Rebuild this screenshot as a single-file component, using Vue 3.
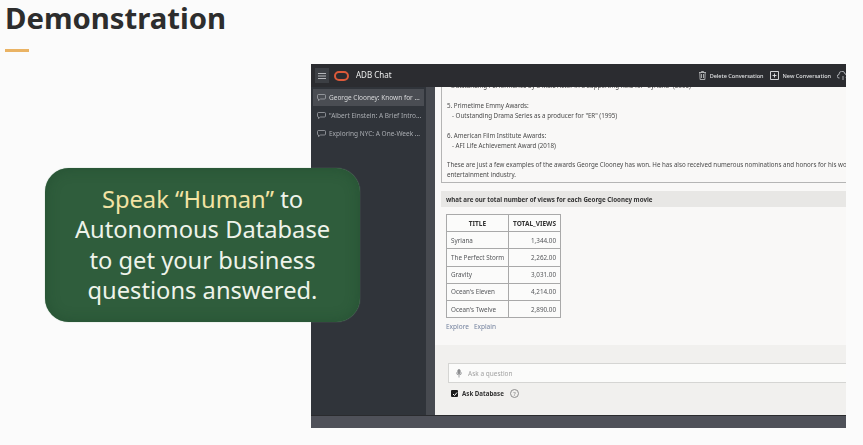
<script setup>
const chats = [
  { id: 1, title: 'George Clooney: Known for ...', active: true },
  { id: 2, title: '"Albert Einstein: A Brief Intro...', active: false },
  { id: 3, title: 'Exploring NYC: A One-Week ...', active: false }
]

const movies = [
  { title: 'Syriana', views: '1,344.00' },
  { title: 'The Perfect Storm', views: '2,262.00' },
  { title: 'Gravity', views: '3,031.00' },
  { title: "Ocean's Eleven", views: '4,214.00' },
  { title: "Ocean's Twelve", views: '2,890.00' }
]
</script>

<template>
  <div class="slide">
    <header class="slide-head">
      <h1>Demonstration</h1>
      <div class="accent"></div>
    </header>

    <div class="callout">
      <div><span class="hl">Speak “Human”</span> to</div>
      <div>Autonomous Database</div>
      <div>to get your business</div>
      <div>questions answered.</div>
    </div>

    <section class="window">
      <div class="topbar">
        <div class="menu-btn">
          <svg width="8" height="6" viewBox="0 0 8 6"><path d="M0 .5h8M0 3h8M0 5.500h8" stroke="#c2c4c7" stroke-width=".9" /></svg>
        </div>
        <svg class="logo" width="15" height="10" viewBox="0 0 15 10"><rect x="1" y="1" width="13" height="8" rx="4" fill="none" stroke="#dc5a3a" stroke-width="2" /></svg>
        <span class="app-name">ADB Chat</span>
        <div class="top-actions">
          <svg width="7" height="9" viewBox="0 0 7 9" fill="none" stroke="#c9cacc" stroke-width=".8"><path d="M0 1.500h7M2.500 1.500V.5h2v1M.8 1.500l.3 7h4.800l.3-7M2.500 3v4M4.500 3v4" /></svg>
          <span class="action">Delete Conversation</span>
          <svg class="plus" width="9" height="9" viewBox="0 0 9 9" fill="none" stroke="#e2e3e5" stroke-width=".9"><path d="M.5.5h8v8h-8zM4.500 2.500v4M2.500 4.500h4" /></svg>
          <span class="action">New Conversation</span>
          <svg class="cloud" width="11" height="9" viewBox="0 0 11 9" fill="none" stroke="#c9ccd0" stroke-width=".8"><path d="M2.500 7H2a1.700 1.700 0 0 1 0-3.400A3 3 0 0 1 8 3a2 2 0 0 1 1 3.700M6 5v4" /></svg>
        </div>
      </div>

      <div class="body">
        <aside class="sidebar">
          <div v-for="chat in chats" :key="chat.id" class="chat-item" :class="{ active: chat.active }">
            <svg width="9" height="7" viewBox="0 0 9 7" fill="none" stroke="#b0b3b8" stroke-width=".7"><path d="M1.500.5h6a1 1 0 0 1 1 1v2.500a1 1 0 0 1-1 1H3.500L1.500 6.500V5a1 1 0 0 1-1-1V1.500a1 1 0 0 1 1-1z" /></svg>
            <span>{{ chat.title }}</span>
          </div>
        </aside>
        <div class="rail"></div>

        <main class="main">
          <div class="conversation">
            <div class="answer">
              <p class="cut">- Outstanding Performance by a Male Actor in a Supporting Role for "Syriana" (2006)</p>
              <p>5. Primetime Emmy Awards:</p>
              <p class="sub">- Outstanding Drama Series as a producer for "ER" (1995)</p>
              <p class="gap">6. American Film Institute Awards:</p>
              <p class="sub">- AFI Life Achievement Award (2018)</p>
              <p class="gap closing">These are just a few examples of the awards George Clooney has won. He has also received numerous nominations and honors for his work in the</p>
              <p>entertainment industry.</p>
            </div>

            <div class="question">what are our total number of views for each George Clooney movie</div>

            <table class="result">
              <thead>
                <tr><th>TITLE</th><th>TOTAL_VIEWS</th></tr>
              </thead>
              <tbody>
                <tr v-for="m in movies" :key="m.title">
                  <td>{{ m.title }}</td>
                  <td class="num">{{ m.views }}</td>
                </tr>
              </tbody>
            </table>

            <div class="links"><span>Explore</span><span>Explain</span></div>
          </div>

          <div class="composer">
            <div class="ask-input">
              <svg width="6" height="9" viewBox="0 0 6 9" fill="none" stroke="#8c8d8f" stroke-width=".8"><rect x="1.800" y=".5" width="2.400" height="4.500" rx="1.200" fill="#8c8d8f" /><path d="M.5 3.500a2.500 2.500 0 0 0 5 0M3 6.500v2" /></svg>
              <span>Ask a question</span>
            </div>
            <div class="ask-db">
              <span class="check">
                <svg width="6" height="6" viewBox="0 0 6 6" fill="none" stroke="#fff" stroke-width="1"><path d="M1 3l1.500 1.500L5 1.500" /></svg>
              </span>
              <b>Ask Database</b>
              <span class="help">?</span>
            </div>
          </div>
        </main>
      </div>
      <div class="foot"></div>
    </section>
  </div>
</template>

<style>
html, body {
  margin: 0;
  background: #fbfbfb;
}
</style>

<style scoped>
.slide {
  position: relative;
  width: 863px;
  height: 445px;
  overflow: hidden;
  background: #fbfbfb;
  font-family: "Noto Sans", "Open Sans", sans-serif;
}

.slide-head {
  height: 64px;
  padding-left: 5px;
  box-sizing: border-box;
}

.slide-head h1 {
  margin: 0;
  font-size: 29.300px;
  line-height: 36px;
  font-weight: 700;
  color: #2d2d2d;
}

.accent {
  width: 24px;
  height: 3px;
  margin-top: 13px;
  background: #eab364;
}

.callout {
  position: absolute;
  left: 45px;
  top: 168px;
  width: 315px;
  height: 154px;
  padding-top: 16px;
  box-sizing: border-box;
  border-radius: 24px;
  background: #2f5d3c;
  box-shadow: 0 0 1px #7f9f88, inset 0 0 14px rgba(20, 60, 35, 0.35);
  color: #eef3ea;
  font-size: 23.700px;
  line-height: 30.400px;
  text-align: center;
  z-index: 2;
}

.hl {
  color: #f3e3a4;
}

.window {
  width: 535px;
  height: 364px;
  margin-left: 311px;
  display: flex;
  flex-direction: column;
  overflow: hidden;
  background: #30343a;
  filter: blur(0.35px);
}

.topbar {
  height: 23px;
  flex: none;
  display: flex;
  align-items: center;
  background: #2b2c30;
  color: #eceded;
}

.menu-btn {
  width: 14px;
  height: 15px;
  margin-left: 4px;
  display: flex;
  align-items: center;
  justify-content: center;
  background: #3c3f44;
}

.logo {
  margin-left: 5px;
}

.app-name {
  margin-left: 7px;
  margin-bottom: 3px;
  font-size: 8px;
}

.top-actions {
  margin-left: auto;
  display: flex;
  align-items: center;
  margin-right: -2px;
}

.action {
  margin-left: 4px;
  font-size: 5.550px;
  color: #dfe0e2;
  font-weight: 500;
}

.plus {
  margin-left: 6px;
}

.cloud {
  margin-left: 6px;
}

.body {
  flex: 1;
  display: flex;
  min-height: 0;
}

.sidebar {
  width: 115px;
  flex: none;
  padding: 2px 2px 0 2px;
  box-sizing: border-box;
}

.rail {
  width: 9px;
  flex: none;
  background: #474a50;
}

.chat-item {
  height: 18px;
  display: flex;
  align-items: center;
  gap: 3px;
  padding-left: 4px;
  font-size: 6.500px;
  color: #a9acb1;
  white-space: nowrap;
  overflow: hidden;
}

.chat-item.active {
  height: 17px;
  background: #4a4d53;
  color: #d8d9db;
}

.main {
  flex: 1;
  min-width: 0;
  display: flex;
  flex-direction: column;
  background: #f1f0ee;
  color: #4a4a4a;
}

.conversation {
  height: 258px;
  flex: none;
  padding: 0 0 0 6px;
  box-sizing: border-box;
  background: #f9f8f7;
  overflow: hidden;
}

.answer {
  height: 96px;
  padding: 0 0 0 5px;
  box-sizing: border-box;
  border: 1px solid #b5b5b5;
  border-top: none;
  border-right: none;
  font-size: 6.200px;
  line-height: 10px;
  white-space: nowrap;
  overflow: hidden;
}

.answer p {
  margin: 0;
}

.answer .cut {
  margin-top: -6px;
  margin-bottom: 10px;
}

.answer .sub {
  padding-left: 5px;
}

.answer .gap {
  margin-top: 10px;
}

.answer .closing {
  margin-top: 9px;
}

.question {
  height: 16px;
  margin-top: 8px;
  padding-left: 5px;
  display: flex;
  align-items: center;
  background: #e8e7e5;
  font-size: 6.200px;
  font-weight: 700;
  color: #333;
}

.result {
  margin: 7px 0 0 5px;
  width: 115px;
  border-collapse: collapse;
  table-layout: fixed;
  font-size: 6.300px;
  color: #55575a;
}

.result th,
.result td {
  height: 17.200px;
  padding: 0 4px;
  border: 1px solid #a9a9a9;
  box-sizing: border-box;
  font-weight: 400;
  white-space: nowrap;
  background: #fbfbfa;
}

.result th {
  font-size: 6.500px;
  font-weight: 700;
  color: #333;
  text-align: center;
}

.result th:first-child,
.result td:first-child {
  width: 62px;
}

.result th:last-child {
  padding: 0;
}

.result .num {
  text-align: right;
}

.links {
  display: flex;
  gap: 5px;
  margin: 4px 0 0 5px;
  font-size: 6.500px;
  color: #74829e;
}

.composer {
  flex: 1;
  padding: 18px 0 0 13px;
}

.ask-input {
  height: 18px;
  display: flex;
  align-items: center;
  gap: 6px;
  padding-left: 7px;
  border: 1px solid #d5d5d3;
  border-right: none;
  background: #fbfbfa;
  font-size: 6.500px;
  color: #a2a2a2;
}

.ask-db {
  display: flex;
  align-items: center;
  margin: 6px 0 0 3px;
  font-size: 6.200px;
  color: #333;
}

.check {
  width: 7px;
  height: 7px;
  margin-right: 4px;
  display: flex;
  align-items: center;
  justify-content: center;
  border-radius: 1px;
  background: #1c1c1c;
}

.help {
  width: 7px;
  height: 7px;
  margin-left: 6px;
  display: flex;
  align-items: center;
  justify-content: center;
  border: 1px solid #8d8d8d;
  border-radius: 50%;
  font-size: 5.500px;
  color: #777;
}

.foot {
  height: 13px;
  flex: none;
  background: #4f5159;
  border-top: 1px solid #2a2b2e;
  box-sizing: border-box;
}
</style>
